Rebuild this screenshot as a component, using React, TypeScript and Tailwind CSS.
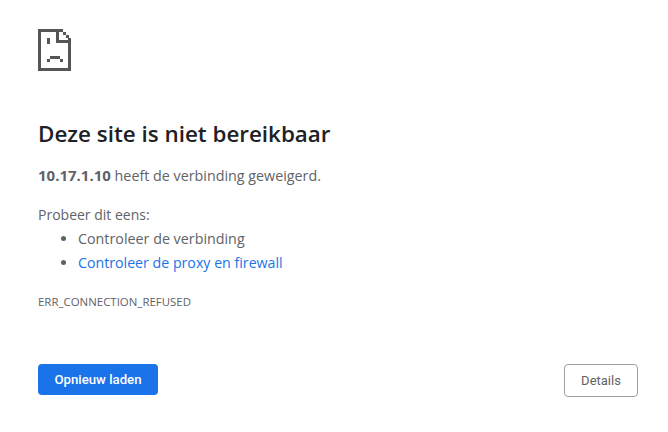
import React from 'react';

const SadPage = () => (
  <svg width="33" height="42" viewBox="0 0 33 42" shapeRendering="crispEdges" fill="#555555">
    <path d="M0 0h25v3H3v36h27V9h3v33H0z" />
    <rect x="25" y="3" width="3" height="3" />
    <rect x="28" y="6" width="3" height="3" />
    <rect x="18" y="0" width="3" height="14" />
    <rect x="18" y="11" width="15" height="3" />
    <rect x="9" y="9" width="3" height="6" />
    <rect x="12" y="27" width="10" height="3" />
    <rect x="9" y="30" width="3" height="3" />
    <rect x="22" y="30" width="3" height="3" />
  </svg>
);

export default function App() {
  return (
    <div className="min-h-[432px] w-[668px] bg-white pl-[38px] pr-[30px] pt-[29px] font-['Open_Sans','Liberation_Sans',sans-serif] text-[14.3px] text-[#5f6368]">
      <SadPage />
      <h1 className="mt-[49px] text-[22.4px] font-semibold leading-[27px] text-[#202124]">Deze site is niet bereikbaar</h1>
      <p className="mt-[16px] leading-[24px]">
        <strong className="text-[15px] font-bold">10.17.1.10</strong> heeft de verbinding geweigerd.
      </p>
      <p className="mt-[15px] text-[14px] leading-[24px]">Probeer dit eens:</p>
      <ul className="list-disc pl-[40px] leading-[24px]">
        <li>Controleer de verbinding</li>
        <li className="text-[14.2px] text-[#1a73e8] marker:text-[#5f6368]">Controleer de proxy en firewall</li>
      </ul>
      <div className="mt-[19px] text-[11.45px] leading-[16px]">ERR_CONNECTION_REFUSED</div>
      <div className="mt-[54px] flex items-start justify-between">
        <button className="h-[31px] w-[120px] rounded-[4px] bg-[#1a73e8] font-['Roboto',sans-serif] text-[13.2px] font-medium text-white">Opnieuw laden</button>
        <button className="h-[33px] w-[74px] rounded-[4px] border border-[#9aa0a6] bg-white font-['Roboto',sans-serif] text-[13px] text-[#5f6368]">Details</button>
      </div>
    </div>
  );
}
